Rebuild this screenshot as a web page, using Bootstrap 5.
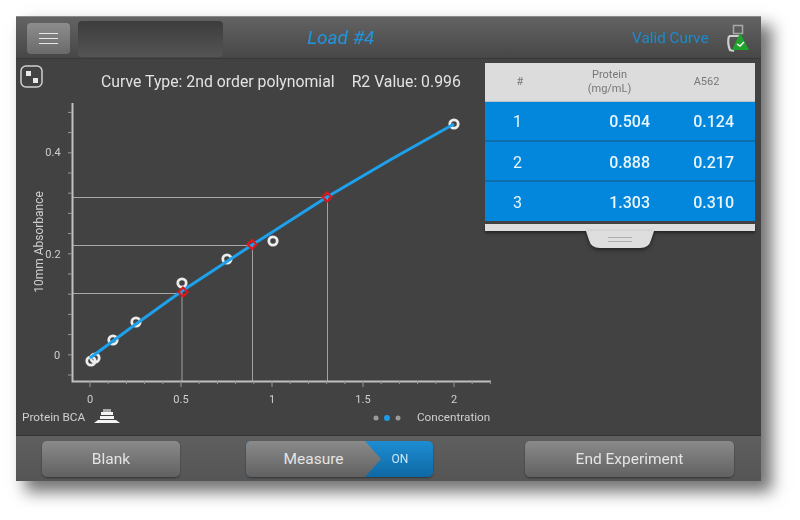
<!DOCTYPE html>
<html lang="en">
<head>
    <meta charset="UTF-8">
    <title>Load #4</title>
    <link href="https://cdn.jsdelivr.net/npm/bootstrap@5.3.2/dist/css/bootstrap.min.css" rel="stylesheet">
    <style>
        body { background: #fff; font-family: Roboto, "Liberation Sans", sans-serif; min-height: 520px; }
        .app-frame { width: 745px; height: 465px; margin: 16px 0 0 16px; background: #424242; box-shadow: 10px 10px 15px 1px rgba(0,0,0,.55); filter: blur(.6px); }
        .top-bar { height: 43px; padding-top: 2px; background: linear-gradient(#636363, #474747); border-bottom: 1px solid #383838; border-top: 1px solid #8a8a8a; }
        .menu-btn { width: 43px; height: 31px; margin-left: 11px; background: linear-gradient(#8d8d8d, #6a6a6a); border: 0; border-radius: 4px; }
        .menu-btn span { display: block; width: 19px; height: 1px; margin: 4px auto; background: #e6e6e6; }
        .title-slot { width: 145px; height: 36px; margin-left: 8px; border-radius: 4px; background: linear-gradient(#3c3c3c, #545454); }
        .load-title { width: 200px; margin-left: 18px; color: #1f93d8; font-size: 19px; font-style: italic; text-align: center; }
        .valid-text { color: #1d86c6; font-size: 15.300px; margin-right: 16px; }
        .flask-icon { margin-right: 10px; }
        .main-area { height: 376px; }
        .chart-side { width: 469px; }
        .curve-line { color: #e2e2e2; font-size: 15.800px; height: 40px; padding: 11px 0 0 85px; white-space: nowrap; }
        .curve-line span + span { margin-left: 17px; }
        .expand-icon { left: 4px; top: 6px; }
        .chart-svg { overflow: visible; }
        .table-side { width: 270px; margin-top: 4px; }
        .data-table { margin: 0; table-layout: fixed; }
        .data-table th { height: 38px; padding: 0; background: #dcdcdc; color: #777; font-size: 11px; font-weight: 400; line-height: 14px; text-align: center; vertical-align: middle; border-bottom: 1px solid #b8c4cc; }
        .data-table th:nth-child(2) { padding-left: 8px; }
        .data-table th:nth-child(3) { padding-left: 2px; }
        .data-table td { height: 40px; padding: 3px 0 0; background: #0287dc; color: #eaf5fc; font-size: 16px; font-weight: 500; vertical-align: middle; text-align: right; border-bottom: 2px solid #0f6fae; }
        .data-table td:first-child { text-align: left; padding-left: 28px; font-weight: 400; }
        .data-table td:nth-child(2) { padding-right: 6px; }
        .data-table td:nth-child(3) { padding-right: 21px; }
        .data-table tr:last-child td { border-bottom: 0; }
        .drawer-rail { height: 7px; margin-top: 3px; background: #dedede; box-shadow: 0 2px 3px rgba(0,0,0,.45); }
        .drawer-tab { width: 68px; height: 17px; margin: 0 auto; filter: drop-shadow(0 2px 2px rgba(0,0,0,.45)); }
        .bottom-bar { height: 46px; background: linear-gradient(#5f5f5f, #555); border-top: 1px solid #343434; }
        .gray-btn { height: 36px; margin: 5px 0 0; padding: 2px 0 0; background: linear-gradient(#8a8a8a, #616161); color: #e4e4e4; border: 0; border-radius: 5px; font-size: 15.500px; box-shadow: 0 1px 2px rgba(0,0,0,.4); }
        .gray-btn:hover { background: linear-gradient(#8a8a8a, #616161); color: #e4e4e4; }
        .blank-btn { width: 138px; margin-left: 26px; }
        .measure-wrap { width: 187px; height: 36px; margin: 5px 0 0 66px; border-radius: 5px; overflow: hidden; background: linear-gradient(#1d8dd2, #0f68a4); box-shadow: 0 1px 2px rgba(0,0,0,.4); }
        .measure-part { width: 135px; background: linear-gradient(#8a8a8a, #616161); color: #e4e4e4; font-size: 15.500px; line-height: 37px; text-align: center; clip-path: polygon(0 0, 119px 0, 135px 18px, 119px 36px, 0 36px); }
        .on-part { width: 52px; padding-right: 14px; color: #cfe8f7; font-size: 12px; line-height: 37px; text-align: center; }
        .end-btn { width: 209px; margin-left: 92px; }
        svg text { font-family: Roboto, "Liberation Sans", sans-serif; }
    </style>
</head>
<body>
    <div class="app-frame d-flex flex-column">
        <!-- barra superior -->
        <div class="top-bar d-flex align-items-center">
            <button class="menu-btn btn p-0" type="button"><span></span><span></span><span></span></button>
            <div class="title-slot"></div>
            <div class="load-title">Load #4</div>
            <div class="valid-text ms-auto">Valid Curve</div>
            <svg class="flask-icon" width="26" height="30" viewBox="0 0 26 30">
                <rect x="8.500" y="1.500" width="9" height="8" fill="none" stroke="#a8a8a8" stroke-width="1.500"/>
                <path d="M4 12h10M4 12q-2 7 1 14l4 1" fill="none" stroke="#cfcfcf" stroke-width="2.200"/>
                <path d="M15 9l9 17H7z" fill="#1fa32b"/>
                <path d="M12 20l3 2 4-4" fill="none" stroke="#fff" stroke-width="1.500"/>
            </svg>
        </div>

        <div class="main-area d-flex">
            <!-- grafica -->
            <div class="chart-side position-relative">
                <svg class="expand-icon position-absolute" width="23" height="23" viewBox="0 0 23 23">
                    <rect x="1" y="1" width="21" height="21" rx="5" fill="none" stroke="#d0d0d0" stroke-width="1.500"/>
                    <rect x="6" y="6" width="5" height="5" fill="#e8e8e8"/>
                    <rect x="13" y="13" width="5" height="5" fill="#e8e8e8"/>
                </svg>
                <div class="curve-line"><span>Curve Type: 2nd order polynomial</span><span>R2 Value: 0.996</span></div>
                <svg class="chart-svg d-block" width="469" height="336" viewBox="16 99 469 336">
                    <g fill="none">
                        <path d="M72 197.500H327M72 245.500H252M72 293.500H182" stroke="#a8a8a8"/>
                        <path d="M182 293V381M252.500 245V381M327.500 197V381" stroke="#a0a0a0"/>
                    </g>
                    <path d="M72.500 103V381.500H491" fill="none" stroke="#c0c0c0" stroke-width="2"/>
                    <g id="ticks" stroke="#999" stroke-width="1"></g>
                    <g fill="#cfcfcf" font-size="11" text-anchor="middle">
                        <text x="90" y="403">0</text><text x="181" y="403">0.5</text><text x="272" y="403">1</text><text x="363" y="403">1.5</text><text x="454" y="403">2</text>
                        <text x="53" y="156">0.4</text><text x="53" y="258">0.2</text><text x="57" y="359">0</text>
                        <text x="43" y="242" font-size="12" transform="rotate(-90 43 242)">10mm Absorbance</text>
                    </g>
                    <g id="dots" fill="none" stroke="#ececec" stroke-width="2.800"></g>
                    <polyline points="90,358 136,324 182,291 252,245 327,197 390,160 454,124" fill="none" stroke="#1da1ec" stroke-width="3"/>
                    <g fill="none" stroke="#e8141c" stroke-width="2">
                        <path d="M183 287.500l4.500 4.500-4.500 4.500-4.500-4.500zM252 240l4.500 4.500-4.500 4.500-4.500-4.500zM327 192.500l4.500 4.500-4.500 4.500-4.500-4.500z"/>
                    </g>
                    <text x="22" y="421" fill="#cfcfcf" font-size="11.800">Protein BCA</text>
                    <g>
                        <rect x="103" y="409" width="8" height="3" fill="#a8a8a8"/>
                        <rect x="101" y="412" width="12" height="3" fill="#f4f4f4"/>
                        <rect x="100" y="416" width="14" height="3" fill="#f4f4f4"/>
                        <path d="M98 420h18l4 3H94z" fill="#f4f4f4"/>
                    </g>
                    <circle cx="376" cy="418" r="2.500" fill="#9a9a9a"/><circle cx="387" cy="418" r="3" fill="#1d9be8"/><circle cx="398" cy="418" r="2.500" fill="#9a9a9a"/>
                    <text x="417" y="421" fill="#cfcfcf" font-size="11.700">Concentration</text>
                </svg>
            </div>

            <!-- tabla de lecturas -->
            <div class="table-side">
                <table class="table data-table">
                    <colgroup><col style="width:70px"><col style="width:101px"><col></colgroup>
                    <thead>
                        <tr><th>#</th><th>Protein<br>(mg/mL)</th><th>A562</th></tr>
                    </thead>
                    <tbody>
                        <tr><td>1</td><td>0.504</td><td>0.124</td></tr>
                        <tr><td>2</td><td>0.888</td><td>0.217</td></tr>
                        <tr><td>3</td><td>1.303</td><td>0.310</td></tr>
                    </tbody>
                </table>
                <div class="drawer-rail"></div>
                <svg class="drawer-tab d-block" viewBox="0 0 68 17">
                    <path d="M0 0H68L65 9Q63 17 54 17H14Q5 17 3 9Z" fill="#dedede"/>
                    <path d="M22 6.500H46M22 10.500H46" stroke="#b0b0b0"/>
                </svg>
            </div>
        </div>

        <!-- barra inferior -->
        <div class="bottom-bar d-flex">
            <button class="btn gray-btn blank-btn" type="button">Blank</button>
            <div class="measure-wrap d-flex">
                <div class="measure-part">Measure</div>
                <div class="on-part">ON</div>
            </div>
            <button class="btn gray-btn end-btn" type="button">End Experiment</button>
        </div>
    </div>

    <script src="https://cdn.jsdelivr.net/npm/bootstrap@5.3.2/dist/js/bootstrap.bundle.min.js"></script>
    <script>
        // marcas de los ejes y puntos de la curva
        const ns = 'http://www.w3.org/2000/svg';
        const ticks = document.getElementById('ticks');
        function line(x1, y1, x2, y2) {
            const l = document.createElementNS(ns, 'line');
            l.setAttribute('x1', x1); l.setAttribute('y1', y1);
            l.setAttribute('x2', x2); l.setAttribute('y2', y2);
            ticks.appendChild(l);
        }
        for (let i = 0; i < 23; i++) { const x = 90 + i * 18.2; if (x < 491) line(x, 381, x, i % 5 === 0 ? 387 : 384); }
        for (let i = 0; i < 14; i++) { const y = 375 - i * 20.2; line(72, y, 68, y); }
        const dots = document.getElementById('dots');
        [[91,361],[95,358],[113,340],[136,322],[182,283],[227,259],[273,241],[454,124]].forEach(function (p) {
            const c = document.createElementNS(ns, 'circle');
            c.setAttribute('cx', p[0]); c.setAttribute('cy', p[1]); c.setAttribute('r', 4.2);
            dots.appendChild(c);
        });
    </script>
</body>
</html>
